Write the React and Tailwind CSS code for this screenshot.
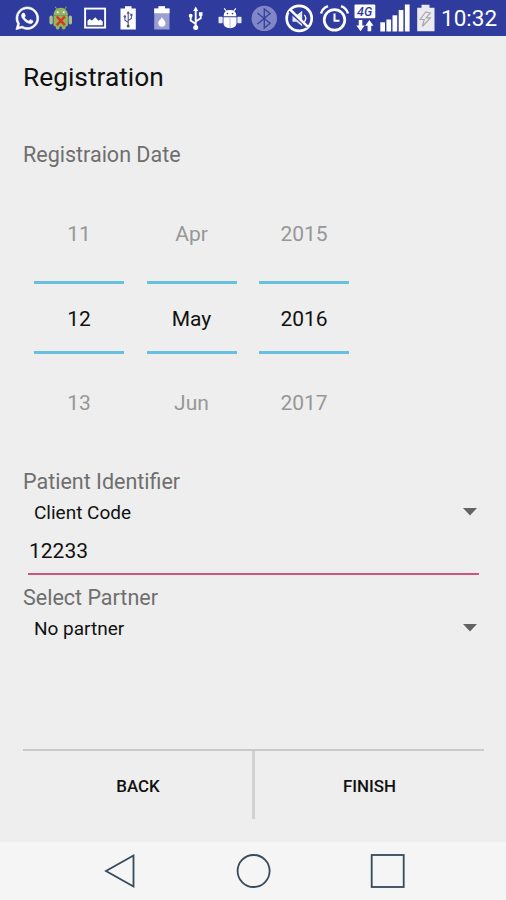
import { FaWhatsapp } from "react-icons/fa";

const COLUMNS = [
  { id: "day", values: ["11", "12", "13"] },
  { id: "month", values: ["Apr", "May", "Jun"] },
  { id: "year", values: ["2015", "2016", "2017"] },
];

/** Status bar slot; icons share the bar's coordinate space */
function Slot({ from, to, children }) {
  return (
    <svg
      className="h-9 shrink-0"
      width={to - from}
      height={36}
      viewBox={`${from} 0 ${to - from} 36`}
      fill="none"
      stroke="none"
    >
      {children}
    </svg>
  );
}

function StatusBar() {
  return (
    <div className="flex h-[35.5px] shrink-0 items-start bg-[#2f3c9e] pl-3 text-white">
      <Slot from={12} to={43}>
        <FaWhatsapp x={14.3} y={5.3} size={26} color="#fff" stroke="#fff" strokeWidth={12} />
      </Slot>
      {/* Debug robot with a red cross */}
      <Slot from={43} to={78}>
        <g fill="#93b35f">
          <path d="M53.5 15.5c0-5 3-7.8 7.2-7.8s7.2 2.8 7.2 7.8z" />
          <rect x="49.4" y="15.5" width="3.4" height="9" rx="1.7" fill="#a9bf8f" />
          <rect x="68.6" y="15.5" width="3.4" height="9" rx="1.7" fill="#a9bf8f" />
          <path d="M53.5 15.5h14.4v9.300a1.700 1.700 0 0 1-1.700 1.700H55.200a1.700 1.700 0 0 1-1.700-1.700z" />
          <rect x="55.8" y="24" width="3.8" height="5.5" rx="1.7" />
          <rect x="61.8" y="24" width="3.8" height="5.5" rx="1.7" />
        </g>
        <path d="M56.5 8.8 55.2 6.7M65 8.8l1.3-2.1" stroke="#9ab56c" strokeWidth="1" />
        <circle cx="57.7" cy="12.3" r="1" fill="#fff" />
        <circle cx="63.7" cy="12.3" r="1" fill="#fff" />
        <path d="m56.7 16.5 8.2 8.6M64.9 16.5l-8.2 8.6" stroke="#d8351c" strokeWidth="2.4" />
      </Slot>
      {/* Picture */}
      <Slot from={78} to={112}>
        <rect x="85.1" y="8.6" width="20" height="19" stroke="#fff" strokeWidth="1.9" />
        <path d="M87.5 25.3v-4.6l2-1.7 2.5 1.5 3.3-3.2 3.2 3.5 2-1.2 2.2 2v3.7z" fill="#fff" />
      </Slot>
      {/* Battery on USB */}
      <Slot from={112} to={145}>
        <path d="M125 6.3h6.5v2.2h4.3v21h-15.3v-21h4.5z" fill="#fff" />
        <path
          d="M128.2 12.5V26M128.2 22.5l-3.3-2.3v-3.4M128.2 20.5l3.2-2v-3.2"
          stroke="#4b5294"
          strokeWidth="1.1"
        />
        <path d="m126.5 13.8 1.7-2.8 1.7 2.8z" fill="#4b5294" />
        <circle cx="128.2" cy="26" r="1.5" fill="#4b5294" />
        <circle cx="124.9" cy="16.5" r="1.2" fill="#4b5294" />
        <rect x="130.3" y="13.7" width="2.2" height="2.2" fill="#4b5294" />
      </Slot>
      {/* Battery saver */}
      <Slot from={145} to={179}>
        <path d="M158.5 6.3h6.5v2.2h4.5v21h-15.3v-21h4.3z" fill="#9a9fd2" />
        <path d="M158.5 6.3h6.5v2.2h4.5v4.7h-15.3V8.5h4.3z" fill="#fff" />
        <path d="M161.9 16.7c.5 2.5 3.6 3.7 3.6 6.4a3.6 3.6 0 0 1-7.2 0c0-2.7 3.1-3.9 3.6-6.4z" fill="#fff" />
      </Slot>
      {/* USB */}
      <Slot from={179} to={210}>
        <path d="M195.7 10v17M195.7 24l-5-3.5V16M195.7 21.5l5-3.2v-4.5" stroke="#fff" strokeWidth="1.9" />
        <path d="m193.2 11 2.5-4.5 2.5 4.5z" fill="#fff" />
        <circle cx="195.7" cy="27.5" r="2.5" fill="#fff" />
        <circle cx="190.7" cy="15.7" r="1.9" fill="#fff" />
        <rect x="198.9" y="12.2" width="3.6" height="3.6" fill="#fff" />
      </Slot>
      {/* USB debugging */}
      <Slot from={210} to={246}>
        <path d="M223.7 16.3c0-4.500 2.5-6.200 6.300-6.200s6.300 1.700 6.300 6.200z" fill="#fff" />
        <path d="m226.2 11-2-2.700M233.800 11l2-2.700" stroke="#fff" strokeWidth="1.2" />
        <path d="M223.5 17.300h13V23c0 3-2.500 5.200-6.500 5.200s-6.500-2.200-6.500-5.200z" fill="#fff" />
        <rect x="218.5" y="16.8" width="4.2" height="6.4" rx=".8" fill="#e6e8f6" />
        <rect x="237.3" y="16.8" width="4.2" height="6.4" rx=".8" fill="#e6e8f6" />
        <circle cx="227.5" cy="13.6" r=".8" fill="#2f3c9e" />
        <circle cx="232.5" cy="13.6" r=".8" fill="#2f3c9e" />
        <path d="M230 18v10" stroke="#aeb3dc" strokeWidth=".9" />
      </Slot>
      {/* Bluetooth, idle */}
      <Slot from={246} to={281}>
        <circle cx="264.3" cy="18.4" r="12.7" fill="#8086c6" />
        <path d="m257.500 13 12.500 10.200-5.700 4.800V9l5.700 4.500L257.500 24" stroke="#36439f" strokeWidth="1.4" />
      </Slot>
      {/* Muted */}
      <Slot from={281} to={317}>
        <circle cx="299.2" cy="18.4" r="12.5" stroke="#fff" strokeWidth="2.7" />
        <path d="M292.5 15.3h4l5.7-4.6v15.5l-5.7-4.5h-4z" fill="#e4e6f6" />
        <path d="M304.3 14.8c1.700 2 1.700 5 0 7" stroke="#fff" strokeWidth="1.3" />
        <path d="m289 11.5 18.5 16" stroke="#2f3c9e" strokeWidth="2" />
        <path d="m290.2 9.7 18 17.5" stroke="#fff" strokeWidth="2.5" />
      </Slot>
      {/* Alarm */}
      <Slot from={317} to={352}>
        <circle cx="334.5" cy="19.9" r="10.3" stroke="#fff" strokeWidth="2.7" />
        <path d="M334.5 13.5v7.2h5" stroke="#fff" strokeWidth="2" />
        <path d="M321 13.5c1-3.5 3.5-6 7-7.3M348 13.5c-1-3.5-3.5-6-7-7.3" stroke="#fff" strokeWidth="2.5" />
      </Slot>
      {/* Mobile data */}
      <Slot from={352} to={378}>
        <rect x="354.5" y="4.5" width="20.8" height="13.8" rx="1" fill="#fff" />
        <text
          x="364.7"
          y="15.8"
          textAnchor="middle"
          className="fill-[#2f3c9e] font-['Roboto',sans-serif] text-[12.5px] font-medium italic"
        >
          4G
        </text>
        <path d="M358.7 20h3.6v5.5h2.4l-4.2 5.800-4.200-5.800h2.400zM367.600 31.300h3.600v-5.500h2.300l-4.100-5.800-4.200 5.800h2.400z" fill="#fff" />
      </Slot>
      {/* Signal */}
      <Slot from={378} to={413}>
        <g fill="#fff">
          <rect x="380.3" y="22.3" width="4.7" height="9.2" />
          <rect x="386.4" y="19.5" width="4.7" height="12" />
          <rect x="392.5" y="15.3" width="4.7" height="16.2" />
          <rect x="398.7" y="10" width="4.7" height="21.5" />
          <rect x="404.9" y="4.5" width="4.7" height="27" />
        </g>
      </Slot>
      {/* Battery charging */}
      <Slot from={413} to={438}>
        <path d="M421.5 4.8h8v3h5v23.5h-17.3V7.8h4.3z" fill="#ebebef" />
        <path d="m425.5 12-5.3 7.5h4l-1.8 7 8-8.700h-4.300l4.200-4.700z" stroke="#a9a9ad" strokeWidth="1.2" />
      </Slot>
      <span className="ml-[3px] text-[22.5px] leading-[37px]">10:32</span>
    </div>
  );
}

function PickerColumn({ values }) {
  const [prev, current, next] = values;
  return (
    <div className="flex w-[90px] flex-col text-center text-[21px]">
      <div className="h-[70px] leading-[46px] text-[#979797]">{prev}</div>
      <div className="h-[73px] border-y-[3px] border-[#68c0e0] leading-[70px] text-[#111]">{current}</div>
      <div className="h-[75px] pt-6 leading-[50px] text-[#979797]">{next}</div>
    </div>
  );
}

function Spinner({ value }) {
  return (
    <div className="flex h-[30px] items-start justify-between pr-[7px] pl-[11px] text-[19px] leading-[30px] text-[#111]">
      <span>{value}</span>
      <svg className="mt-[10.5px] h-2 w-[14px]" viewBox="0 0 14 8" fill="#636363">
        <path d="M0 0h14L7 7.5z" />
      </svg>
    </div>
  );
}

function NavBar() {
  return (
    <div className="flex h-[58px] shrink-0 items-start bg-[#f5f5f5] pt-[11px]">
      <svg className="ml-[103px] h-9 w-9" viewBox="0 0 36 36" fill="none" stroke="#364a5b" strokeWidth="1.8">
        <path d="M30.500 2.500v31L3 18z" />
      </svg>
      <svg className="ml-[97px] h-9 w-9" viewBox="0 0 36 36" fill="none" stroke="#364a5b" strokeWidth="1.8">
        <circle cx="17.6" cy="18" r="16" />
      </svg>
      <svg className="ml-[98px] h-9 w-9" viewBox="0 0 36 36" fill="none" stroke="#364a5b" strokeWidth="1.8">
        <rect x="1.7" y="2" width="32" height="32" />
      </svg>
    </div>
  );
}

export default function App() {
  return (
    <div className="flex h-[900px] w-[506px] flex-col overflow-hidden bg-[#eee] font-['Roboto',sans-serif]">
      <StatusBar />

      <main className="flex flex-1 flex-col pr-[22px] pl-[23px]">
        <h1 className="mt-[25px] text-[26.3px] leading-8 text-[#111]">Registration</h1>
        <h2 className="mt-[46px] text-[21.5px] leading-8 text-[#6f6f6f]">Registraion Date</h2>

        <div className="mt-10 flex gap-[22.5px] pl-[11px]">
          {COLUMNS.map((col) => (
            <PickerColumn key={col.id} values={col.values} />
          ))}
        </div>

        <label className="mt-[37px] text-[21.5px] leading-8 text-[#6f6f6f]">Patient Identifier</label>
        <Spinner value="Client Code" />
        <div className="mr-[5px] ml-[5px] h-[47px] border-b-2 border-[#d0557d] pl-px text-[21px] leading-[46px] text-[#111]">
          12233
        </div>
        <label className="mt-[6px] text-[21.5px] leading-[33px] text-[#6f6f6f]">Select Partner</label>
        <Spinner value="No partner" />

        <div className="mt-auto mb-[23px] flex h-[70px] border-t-2 border-[#c9c9c9] text-[16.9px] font-medium text-[#111]">
          <button className="w-[232px] border-r-[3px] border-[#d2d2d2] pt-[3px] pl-px">BACK</button>
          <button className="flex-1 pt-[3px]">FINISH</button>
        </div>
      </main>

      <NavBar />
    </div>
  );
}
